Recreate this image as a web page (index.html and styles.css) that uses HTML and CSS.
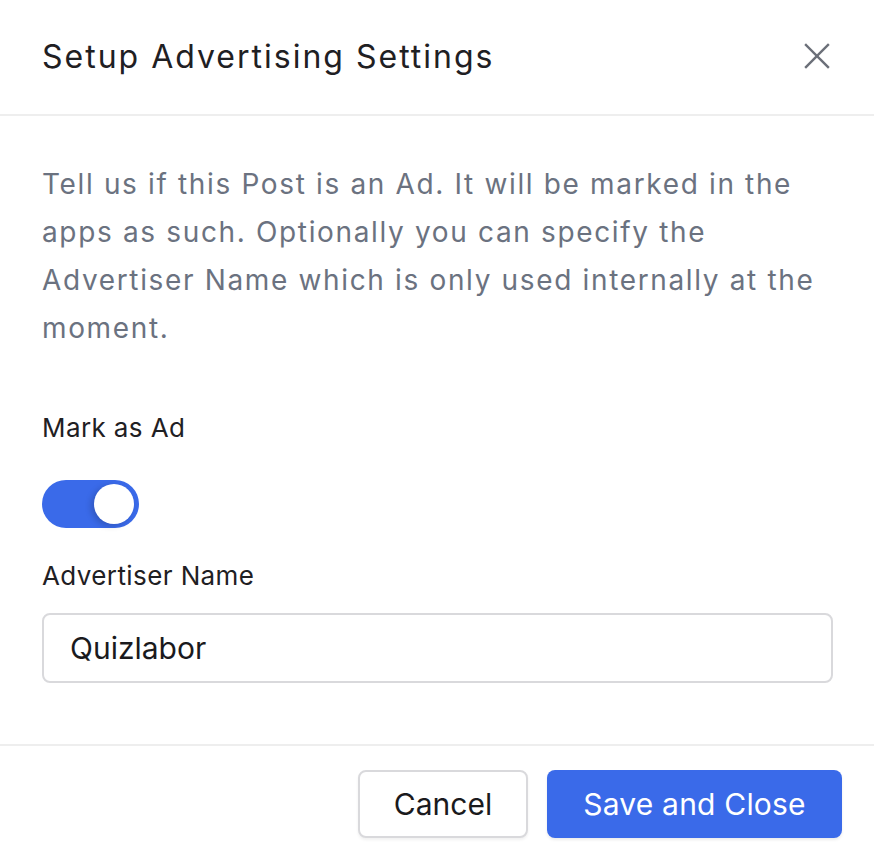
FILE: index.html
```html
<!DOCTYPE html>
<html lang="en">
<head>
<meta charset="utf-8">
<title>Setup Advertising Settings</title>
<link rel="stylesheet" href="styles.css">
</head>
<body>
<div class="modal">
  <div class="modal-header">
    <h2 class="modal-title">Setup Advertising Settings</h2>
    <button class="close-btn" aria-label="Close">
      <svg width="26" height="26" viewBox="0 0 26 26" fill="none" stroke="currentColor" stroke-width="2.4" stroke-linecap="square">
        <line x1="2" y1="2" x2="24" y2="24"/>
        <line x1="24" y1="2" x2="2" y2="24"/>
      </svg>
    </button>
  </div>
  <div class="modal-body">
    <p class="description">Tell us if this Post is an Ad. It will be marked in the apps as such. Optionally you can specify the Advertiser Name which is only used internally at the moment.</p>
    <div class="field field-toggle">
      <div class="label">Mark as Ad</div>
      <div class="toggle on"><span class="knob"></span></div>
    </div>
    <div class="field">
      <div class="label">Advertiser Name</div>
      <div class="input">Quizlabor</div>
    </div>
  </div>
  <div class="modal-footer">
    <button class="btn btn-secondary">Cancel</button>
    <button class="btn btn-primary">Save and Close</button>
  </div>
</div>
</body>
</html>
```

FILE: styles.css
```css
* { box-sizing: border-box; }
html, body { margin: 0; padding: 0; background: #ffffff; }
body { font-family: Inter, "Noto Sans", sans-serif; color: #1f2937; }

.modal { width: 874px; }

.modal-header {
  height: 116px;
  padding: 0 42px;
  display: flex;
  align-items: center;
  justify-content: space-between;
  border-bottom: 2px solid #eeeeee;
}
.modal-title {
  margin: 0;
  font-size: 32px;
  font-weight: 400;
  line-height: 40px;
  letter-spacing: 2px;
  color: #1f2023;
}
.close-btn {
  border: 0;
  background: none;
  padding: 0;
  margin-right: 2px;
  color: #6b6f78;
  display: flex;
  margin-bottom: 2px;
}

.modal-body { padding: 44px 41px 61px 42px; }
.description {
  margin: 0;
  font-size: 28px;
  line-height: 48px;
  letter-spacing: 1.65px;
  color: #6b7280;
}
.field { display: flex; flex-direction: column; }
.field-toggle { margin-top: 58px; }
.label {
  font-size: 26px;
  line-height: 36px;
  letter-spacing: 0.4px;
  color: #1f2023;
}
.toggle {
  margin-top: 34px;
  width: 97px;
  height: 48px;
  border-radius: 24px;
  background: #3a6ae9;
  display: flex;
  align-items: center;
  justify-content: flex-end;
  padding: 0 5px;
  margin-bottom: 30px;
}
.knob {
  width: 40px;
  height: 40px;
  border-radius: 50%;
  background: #ffffff;
  box-shadow: -3px 2px 6px rgba(0, 0, 0, 0.18);
}
.input {
  margin-top: 19px;
  height: 70px;
  border: 2px solid #d9d9dc;
  border-radius: 8px;
  padding: 0 26px;
  display: flex;
  align-items: center;
  font-size: 30px;
  color: #1a1a1d;
}

.modal-footer {
  border-top: 2px solid #eeeeee;
  padding: 24px 32px 19px;
  display: flex;
  justify-content: flex-end;
  gap: 19px;
}
.btn {
  height: 68px;
  border-radius: 8px;
  font-family: Inter, "Noto Sans", sans-serif;
  font-size: 30px;
  padding: 0;
  cursor: pointer;
}
.btn-secondary {
  width: 170px;
  background: #ffffff;
  border: 2px solid #d9d9dc;
  color: #1a1a1d;
  box-shadow: 0 2px 3px rgba(0, 0, 0, 0.06);
}
.btn-primary {
  width: 295px;
  background: #3a6ae9;
  border: 0;
  color: #ffffff;
  letter-spacing: 0.2px;
  box-shadow: 0 2px 3px rgba(0, 0, 0, 0.08);
}
```
